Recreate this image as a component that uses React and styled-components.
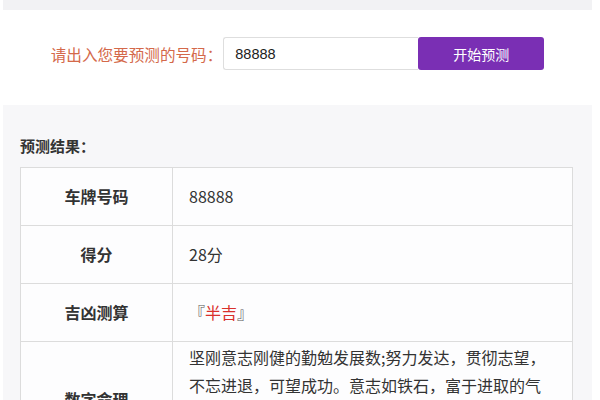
import React from "react";
import styled, { createGlobalStyle } from "styled-components";

const GlobalStyle = createGlobalStyle`
  body {
    margin: 0;
    background: #fff;
    font-family: "Noto Sans CJK SC", "Noto Sans", sans-serif;
    color: #333;
  }
`;

const Page = styled.div`
  margin: 0 8px 0 3px;
`;

const TopBar = styled.div`
  height: 10px;
  background: #f2f2f4;
`;

const FormRow = styled.form`
  display: flex;
  justify-content: center;
  align-items: center;
  padding: 27px 0 35px;
`;

const Label = styled.label`
  font-size: 15.6px;
  color: #d4694a;
  margin-right: 1px;
  white-space: nowrap;
`;

const Input = styled.input`
  box-sizing: border-box;
  width: 195px;
  height: 33px;
  padding: 0 11px;
  border: 1px solid #dedede;
  border-right: none;
  border-radius: 3px 0 0 3px;
  font-family: "Liberation Sans", Arial, sans-serif;
  font-size: 14.5px;
  color: #222;
  outline: none;
`;

const Button = styled.button`
  width: 126px;
  height: 33px;
  border: none;
  border-radius: 3px;
  background: #7a2fb4;
  color: #fff;
  font-family: "Noto Sans CJK SC", sans-serif;
  font-size: 14px;
  cursor: pointer;
`;

const Results = styled.section`
  background: #f7f7f9;
  padding: 32px 19px 0 17px;
`;

const Heading = styled.h3`
  margin: 0 0 12px;
  font-size: 15px;
  line-height: 18px;
  font-weight: bold;
  color: #333;
`;

const Table = styled.table`
  width: 100%;
  border-collapse: collapse;
  table-layout: fixed;
  background: #fdfdfe;

  td {
    border: 1px solid #dcdcdc;
    font-size: 16px;
  }
`;

const Key = styled.td`
  padding: 14px 0;
  line-height: 29px;
  text-align: center;
  font-weight: bold;
  color: #333;
`;

const Value = styled.td`
  padding: ${({ $long }) => ($long ? "1px 23px 1px 16px" : "14px 16px")};
  line-height: ${({ $long }) => ($long ? "28px" : "29px")};
  color: #333;
`;

const Bracket = styled.span`
  color: #555;
`;

const Luck = styled.span`
  color: #d9302c;
`;

const rows = [
  { key: "车牌号码", value: "88888" },
  { key: "得分", value: "28分" },
  {
    key: "吉凶测算",
    value: (
      <>
        <Bracket>『</Bracket>
        <Luck>半吉</Luck>
        <Bracket>』</Bracket>
      </>
    ),
  },
  {
    key: "数字命理",
    long: true,
    value:
      "坚刚意志刚健的勤勉发展数;努力发达，贯彻志望，不忘进退，可望成功。意志如铁石，富于进取的气魄，必获成功。但须注意过刚易折，宜修身养性，以和为贵，则福禄自来。",
  },
];

export default function App() {
  return (
    <Page>
      <GlobalStyle />
      <TopBar />
      <FormRow onSubmit={(e) => e.preventDefault()}>
        <Label htmlFor="plate">请出入您要预测的号码：</Label>
        <Input id="plate" defaultValue="88888" />
        <Button type="submit">开始预测</Button>
      </FormRow>
      <Results>
        <Heading>预测结果：</Heading>
        <Table>
          <colgroup>
            <col style={{ width: 152 }} />
            <col />
          </colgroup>
          <tbody>
            {rows.map((row) => (
              <tr key={row.key}>
                <Key>{row.key}</Key>
                <Value $long={row.long}>{row.value}</Value>
              </tr>
            ))}
          </tbody>
        </Table>
      </Results>
    </Page>
  );
}
